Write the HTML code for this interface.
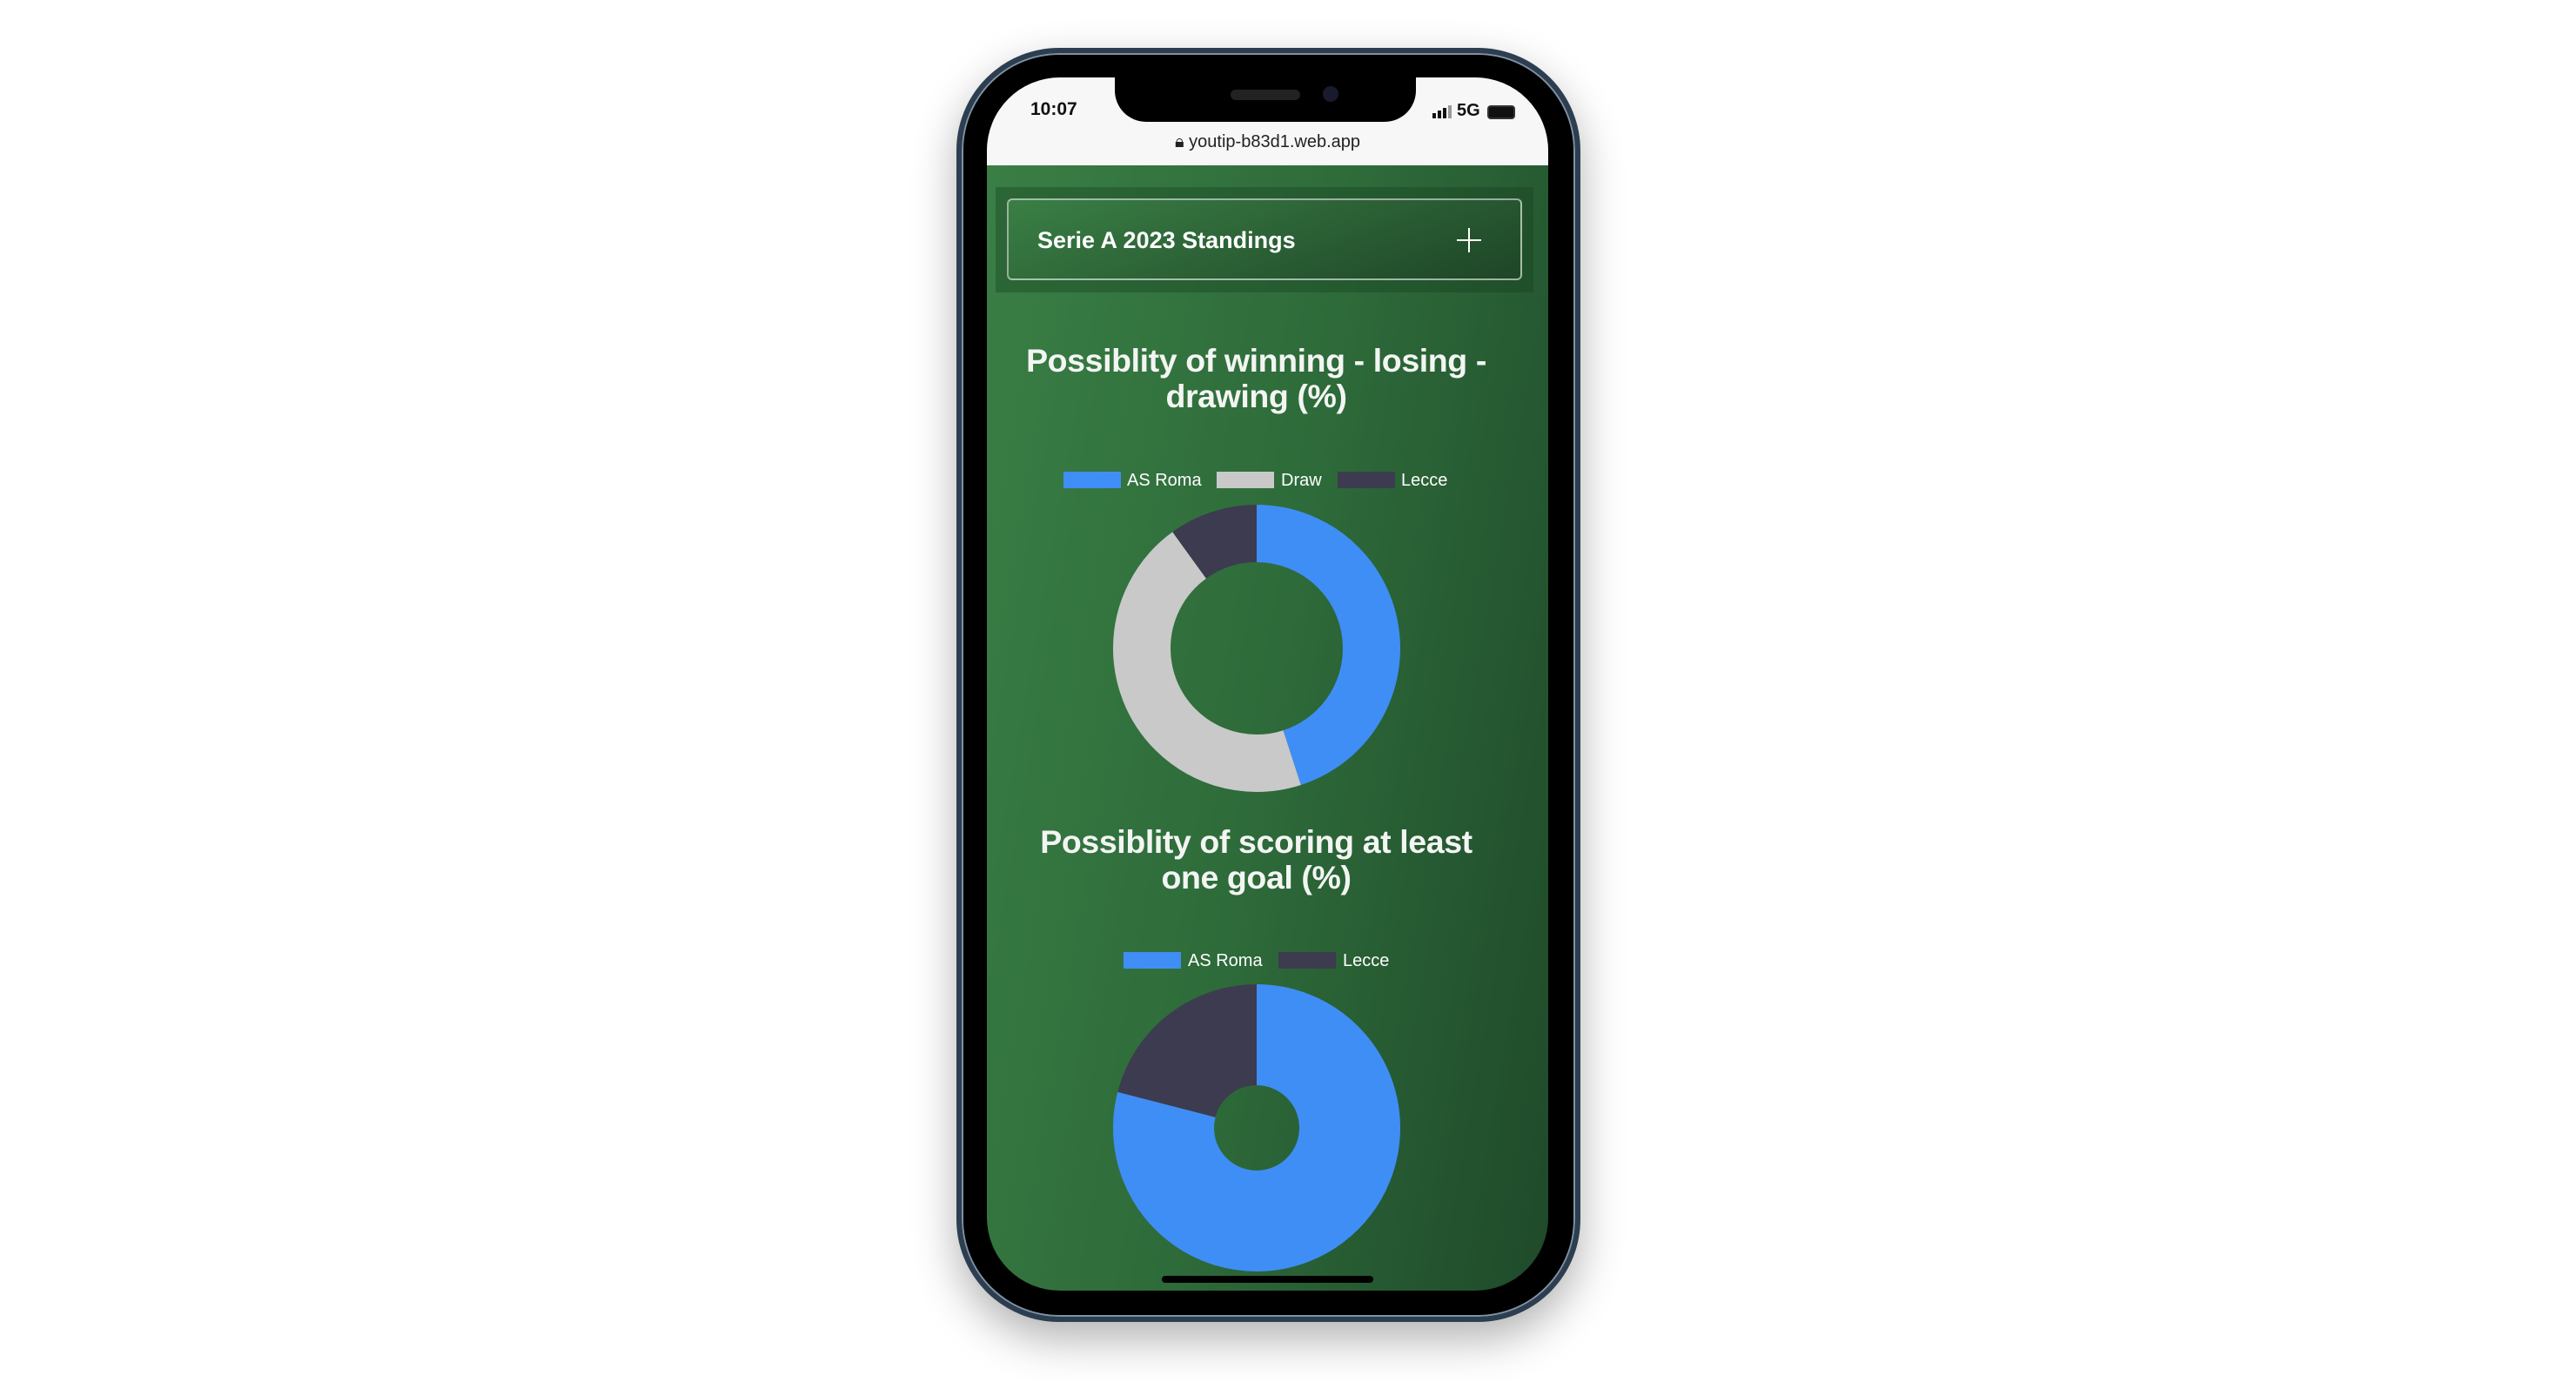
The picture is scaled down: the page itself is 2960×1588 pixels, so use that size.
<!DOCTYPE html>
<html><head><meta charset="utf-8"><style>
*{margin:0;padding:0;box-sizing:border-box}
body{width:2960px;height:1588px;background:#fff;position:relative;overflow:hidden;font-family:"Liberation Sans",sans-serif}
.phone{position:absolute;left:1099px;top:55px;width:717px;height:1464px;border-radius:118px;background:#000;border:6px solid #2c3e50;box-shadow:0 0 0 2px #7f92a6 inset,0 20px 50px rgba(0,0,0,.3)}
.screen{position:absolute;left:1134px;top:89px;width:645px;height:1394px;border-radius:84px;overflow:hidden;background:linear-gradient(100deg,#3a7f45 0%,#2e6b3a 50%,#1f4a2a 100%)}
.status{position:absolute;left:0;top:0;width:645px;height:101px;background:#f7f7f7}
.notch{position:absolute;left:1281px;top:80px;width:346px;height:60px;background:#000;border-radius:0 0 36px 36px}
.t{position:absolute;color:#111}
.card{position:absolute;left:10px;top:126px;width:618px;height:121px;background:rgba(20,60,30,.35)}
.box{position:absolute;left:23px;top:139px;width:592px;height:94px;border:2px solid rgba(255,255,255,.55);border-radius:6px;background:linear-gradient(160deg,#3a7f45,#1e4527)}
h2{position:absolute;width:645px;left:-13px;text-align:center;color:#f3f5f3;font-size:37.5px;line-height:41px;font-weight:bold;letter-spacing:-0.4px}
.lg{position:absolute;height:19px}
.lt{position:absolute;color:#fff;font-size:20px;line-height:20px}
.bar{position:absolute;background:#111;width:4px}
</style></head><body>
<div class="phone"></div>
<div class="screen">
<div class="status"></div>
<div class="t" style="left:50px;top:25px;font-size:21px;font-weight:bold">10:07</div>
<div class="bar" style="left:512px;top:41px;height:6px"></div>
<div class="bar" style="left:518px;top:38px;height:9px"></div>
<div class="bar" style="left:524px;top:35px;height:12px"></div>
<div class="bar" style="left:530px;top:32px;height:15px;background:#999"></div>
<div class="t" style="left:540px;top:27px;font-size:20px;font-weight:bold">5G</div>
<div style="position:absolute;left:575px;top:32px;width:32px;height:16px;border:2px solid #333;border-radius:4px;background:#111"></div>
<div class="t" style="left:0;width:645px;text-align:center;top:63px;font-size:20px;color:#222">🔒︎ youtip-b83d1.web.app</div>
<div class="card"></div>
<div class="box"></div>
<div style="position:absolute;left:58px;top:172px;color:#fff;font-size:27px;font-weight:bold">Serie A 2023 Standings</div>
<div style="position:absolute;left:540px;top:186px;width:28px;height:2px;background:#fff"></div>
<div style="position:absolute;left:553px;top:173px;width:2px;height:28px;background:#fff"></div>
<h2 style="top:305px">Possiblity of winning - losing -<br>drawing (%)</h2>
<div class="lg" style="left:88px;top:453px;width:66px;background:#3f8ef5"></div>
<div class="lt" style="left:161px;top:453px">AS Roma</div>
<div class="lg" style="left:264px;top:453px;width:66px;background:#c9c9c9"></div>
<div class="lt" style="left:338px;top:453px">Draw</div>
<div class="lg" style="left:403px;top:453px;width:66px;background:#3d3b50"></div>
<div class="lt" style="left:476px;top:453px">Lecce</div>
<h2 style="top:858px">Possiblity of scoring at least<br>one goal (%)</h2>
<div class="lg" style="left:157px;top:1005px;width:66px;background:#3f8ef5"></div>
<div class="lt" style="left:231px;top:1005px">AS Roma</div>
<div class="lg" style="left:335px;top:1005px;width:66px;background:#3d3b50"></div>
<div class="lt" style="left:409px;top:1005px">Lecce</div>
<svg style="position:absolute;left:0;top:0" width="645" height="1394">
<g transform="translate(310,656) rotate(-90)">
<circle r="132" fill="none" stroke="#3f8ef5" stroke-width="66" stroke-dasharray="373.2 829.4"/>
<circle r="132" fill="none" stroke="#c9c9c9" stroke-width="66" stroke-dasharray="0 373.2 373.2 829.4"/>
<circle r="132" fill="none" stroke="#3d3b50" stroke-width="66" stroke-dasharray="0 746.4 83 829.4"/>
</g>
<g transform="translate(310,1207) rotate(-90)">
<circle r="107" fill="none" stroke="#3f8ef5" stroke-width="116" stroke-dasharray="531.1 672.3"/>
<circle r="107" fill="none" stroke="#3d3b50" stroke-width="116" stroke-dasharray="0 531.1 141.2 672.3"/>
</g>
<rect x="201" y="1377" width="243" height="8" rx="4" fill="#000"/>
</svg>
</div>
<div class="notch"></div>
<div style="position:absolute;left:1414px;top:103px;width:80px;height:12px;border-radius:6px;background:#222"></div>
<div style="position:absolute;left:1520px;top:99px;width:18px;height:18px;border-radius:50%;background:#1a1a2e"></div>
</body></html>
